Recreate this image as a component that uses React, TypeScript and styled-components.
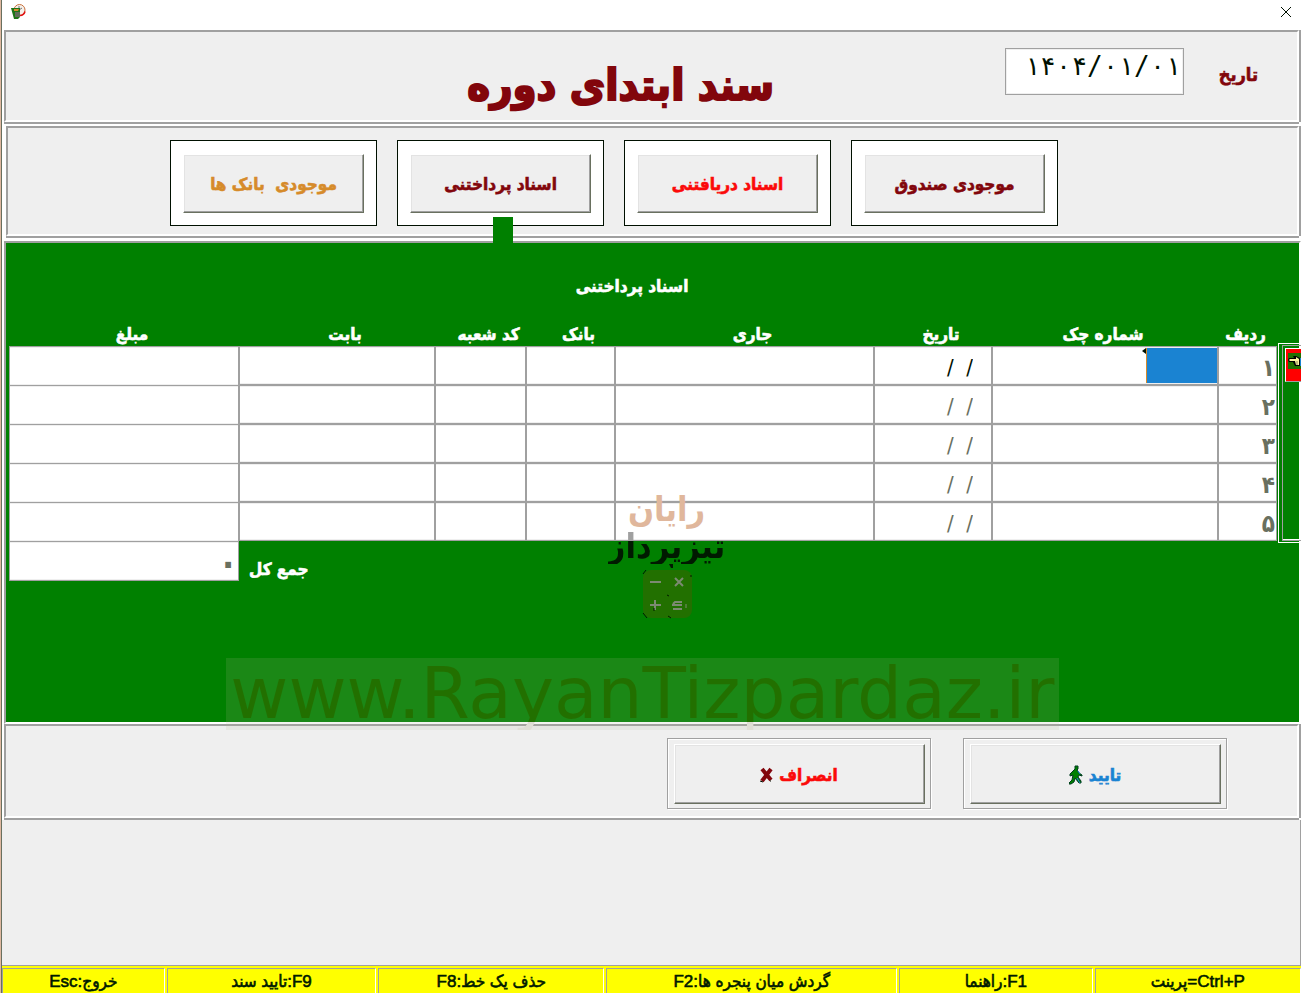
import React from "react";
import styled, { createGlobalStyle } from "styled-components";

const face = "#efefef";
const line = "#a0a0a0";
const shade = "#69705f";
const green = "#008000";
const maroon = "#82060c";
const sans = '"DejaVu Sans Condensed", "DejaVu Sans", sans-serif';
const mono = '"DejaVu Sans Mono", monospace';

const GlobalStyle = createGlobalStyle`
  * { box-sizing: border-box; }
  body { margin: 0; background: #fff; font-family: ${sans}; overflow-x: hidden; }
  button, input { font: inherit; color: inherit; }
`;

const Window = styled.main`
  display: flex;
  flex-direction: column;
  min-height: 100vh;
  padding-left: 2px;
  background: linear-gradient(to right, #dfb8a0 1px, ${shade} 1px, ${shade} 2px, #fff 2px);
`;

const TitleBar = styled.header`
  display: flex;
  align-items: flex-start;
  justify-content: space-between;
  height: 30px;
  padding: 3px 9px 0 8px;
`;

const CloseButton = styled.button`
  display: flex;
  padding: 3px 0;
  border: 0;
  background: none;
`;

const Panel = styled.section<{ $inset?: number }>`
  margin-left: ${(p) => p.$inset ?? 2}px;
  border: 2px solid;
  border-color: ${line} #fff #fff ${line};
  background: ${face};
  box-shadow: 0 2px 0 ${line}, 2px 0 0 ${line};
  margin-right: 2px;
  margin-bottom: 4px;
`;

const HeadPanel = styled(Panel)`
  display: flex;
  height: 92px;
  padding-right: 39px;
`;

const DateLabel = styled.label`
  width: 44px;
  padding-top: 31px;
  color: ${maroon};
  font-size: 18px;
  line-height: 24px;
  font-weight: bold;
  white-space: nowrap;
  -webkit-text-stroke: 0.6px;
`;

const DateInput = styled.input`
  width: 179px;
  height: 47px;
  margin: 16px 30px 0 0;
  padding: 0 2px 12px;
  border: 1px solid ${line};
  box-shadow: inset 0 0 0 1px ${face};
  background: #fff;
  color: #001000;
  font-family: ${mono};
  font-size: 26px;
  direction: ltr;
  text-align: right;
`;

const Title = styled.h1`
  flex: 1;
  margin: 23px 0 0 18%;
  padding-left: 5px;
  color: ${maroon};
  font-size: 43px;
  line-height: 60px;
  text-align: center;
  white-space: nowrap;
  -webkit-text-stroke: 2px;
`;

const TabPanel = styled(Panel)`
  height: 110px;
  margin-bottom: 5px;
  padding: 12px 239px 0 0;
`;

const Tabs = styled.nav`
  display: flex;
  gap: 20px;
`;

const TabFrame = styled.div<{ $active?: boolean }>`
  position: relative;
  display: grid;
  place-items: center;
  width: 207px;
  height: 86px;
  border: 1px solid #001000;
  background: #fff;
  &::after {
    content: ${(p) => (p.$active ? '""' : "none")};
    position: absolute;
    z-index: 1;
    top: 76px;
    left: 95px;
    width: 20px;
    height: 28px;
    background: ${green};
  }
`;

const RaisedButton = styled.button<{ $w: number; $h: number; $color: string }>`
  display: flex;
  align-items: center;
  justify-content: center;
  gap: 6px;
  width: ${(p) => p.$w}px;
  height: ${(p) => p.$h}px;
  padding: 2px 0 0;
  border: 1px solid;
  border-color: #fff ${shade} ${shade} #fff;
  box-shadow: inset -1px -1px 0 ${line}, inset 1px 1px 0 #e3e3e3;
  background: ${face};
  color: ${(p) => p.$color};
  font-size: 17px;
  font-weight: bold;
  line-height: 24px;
  white-space: pre;
  -webkit-text-stroke: 0.6px;
`;

const GreenPanel = styled(Panel)`
  position: relative;
  height: 483px;
  margin-right: 0;
  margin-bottom: 0;
  border-right-color: #fff;
  background: ${green};
  box-shadow: none;
  color: #fff;
  padding-left: 3px;
`;

const SectionTitle = styled.h2`
  margin: 0;
  padding: 30px 44px 0 0;
  font-size: 17px;
  line-height: 27px;
  text-align: center;
  -webkit-text-stroke: 0.6px;
`;

const GridArea = styled.div`
  display: flex;
  align-items: flex-start;
  margin-right: -2px;
`;

const Gutter = styled.div`
  flex: none;
  width: 23px;
  height: 200px;
  margin: 43px 0 0 1px;
  padding: 1px 0 1px 3px;
  border: 1px solid #fff;
  border-right: 0;
`;

const GutterInner = styled.div`
  height: 100%;
  padding: 2px 0 0 2px;
  border: 1px solid ${line};
  border-right: 0;
  box-shadow: inset 0 -1px 0 #fff;
`;

const Marker = styled.div`
  height: 34px;
  padding: 4px 0 0 2px;
  border: 1px solid #fff;
  border-bottom-color: ${line};
  border-right: 0;
  background: #f00;
  direction: ltr;
  overflow: hidden;
`;

const Sheet = styled.table`
  flex: 1;
  table-layout: fixed;
  border-collapse: separate;
  border-spacing: 0;
`;

const HeadCell = styled.th`
  height: 46px;
  padding: 0 0 0 16px;
  font-size: 17px;
  line-height: 24px;
  vertical-align: bottom;
  white-space: nowrap;
  -webkit-text-stroke: 0.6px;
  &:nth-child(-n + 2) {
    padding: 0 4px 0 0;
  }
`;

const Cell = styled.td<{ $amount?: boolean }>`
  height: 39px;
  padding: 0;
  border: 1px solid ${line};
  border-bottom-width: ${(p) => (p.$amount ? 0 : 1)}px;
  background: #fff;
  box-shadow: inset 0 -1px 0 ${face}, inset 0 1px 0 ${face};
`;

const CellRow = styled.div`
  display: flex;
  height: 37px;
`;

type CellKind = "number" | "date" | "total";

const cellPadding: Record<CellKind, string> = {
  number: "4px 1px 0",
  date: "4px 18px 0",
  total: "2px 0 0",
};

const cellSize: Record<CellKind, number> = { number: 24, date: 22, total: 36 };

const CellInput = styled.input<{ $kind?: CellKind; $current?: boolean }>`
  display: block;
  flex: 1;
  width: 100%;
  min-width: 0;
  height: 37px;
  padding: ${(p) => (p.$kind ? cellPadding[p.$kind] : "0 4px")};
  border: 0;
  background: transparent;
  color: ${(p) => (p.$current ? "#001000" : shade)};
  font-size: ${(p) => (p.$kind ? cellSize[p.$kind] : 22)}px;
  font-weight: ${(p) => (p.$kind === "number" || p.$kind === "total" ? "bold" : "normal")};
  text-align: right;
`;

const Selection = styled.span`
  width: 71px;
  margin: 1px 0;
  border-left: 1px solid #d68b2a;
  background: #1a83d2;
`;

const TotalLabel = styled.th`
  padding: 16px 0 0 10px;
  font-size: 17px;
  line-height: 24px;
  text-align: left;
  -webkit-text-stroke: 0.6px;
`;

const TotalCell = styled(Cell)`
  border-bottom-width: 1px;
`;

const Logo = styled.div`
  position: absolute;
  top: 247px;
  left: calc(50% + 14px);
  display: flex;
  flex-direction: column;
  align-items: center;
  width: 140px;
  margin-left: -70px;
  pointer-events: none;
  font-weight: bold;
  white-space: nowrap;
`;

const LogoTop = styled.span`
  color: #e0b79c;
  font-size: 34px;
  line-height: 38px;
`;

const LogoBottom = styled.span`
  background: linear-gradient(${line} 13px, #001a00 13px);
  background-clip: text;
  color: transparent;
  font-size: 34px;
  line-height: 36px;
`;

const SiteMark = styled.div`
  position: absolute;
  top: 415px;
  left: 17%;
  right: 240px;
  height: 72px;
  background: rgba(180, 180, 150, 0.15);
  direction: ltr;
  pointer-events: none;
`;

const SiteName = styled.div`
  background: linear-gradient(#227000 64px, #dfddd4 64px);
  background-clip: text;
  color: transparent;
  font-family: "DejaVu Sans", sans-serif;
  font-size: 71px;
  line-height: 72px;
  text-align: center;
  white-space: nowrap;
`;

const ActionPanel = styled(Panel)`
  display: flex;
  gap: 32px;
  height: 94px;
  padding: 12px 70px 0 0;
  margin-bottom: 2px;
`;

const ActionFrame = styled.div`
  display: grid;
  place-items: center;
  width: 264px;
  height: 71px;
  border: 1px solid ${line};
  box-shadow: inset 1px 1px 0 #fff, 1px 1px 0 #fff;
`;

const EmptyPanel = styled.section`
  flex: 1;
  min-height: 80px;
  border-right: 1px solid ${line};
  border-bottom: 1px solid ${line};
  background: ${face};
`;

const StatusBar = styled.footer`
  display: grid;
  grid-template-columns: 208fr 195fr 293fr 228fr 211fr 164fr;
  column-gap: 2px;
  height: 27px;
  padding-top: 2px;
  background: #ff0;
`;

const StatusItem = styled.div`
  border-top: 1px solid ${line};
  border-left: 1px solid ${line};
  border-right: 1px solid #fff;
  color: #001a00;
  font-family: "Liberation Sans", ${sans};
  font-size: 17px;
  line-height: 26px;
  text-align: center;
  white-space: nowrap;
  -webkit-text-stroke: 0.6px;
`;

const AppIcon = () => (
  <svg width="16" height="17" viewBox="0 0 16 17" aria-hidden="true">
    <circle cx="9.500" cy="7" r="5.500" fill="#f4f0ea" stroke="#c8703c" />
    <path d="M10 12.500a5.500 5.500 0 0 0 5-4" stroke="#e01010" strokeWidth="1.500" fill="none" />
    <path d="M9 3v4l3-2" stroke="#777" fill="none" />
    <path d="M1 5l9 0v9l-2 2H4z" fill="#1d7416" />
    <path d="M4 6h5l-1 2H4z" fill="#d68b2a" />
    <path d="M5 9h5v5H5z" fill="#5f6c58" />
  </svg>
);

const HandIcon = () => (
  <svg width="16" height="16" viewBox="0 0 16 16" aria-hidden="true">
    <rect width="16" height="16" fill="#227000" />
    <path d="M0 7l1-2h5l-1-2h3l4 2v8H7l-2-4H1z" fill="#000" />
    <path d="M1 7l1-1h6V4l3 2v6H8l-1-4H2z" fill="#fff7a0" />
    <path d="M8 9h2M8 11h2" stroke="#8a8450" />
    <rect x="12" y="5" width="4" height="8" fill="#1a83d2" />
  </svg>
);

const WalkIcon = () => (
  <svg width="14" height="20" viewBox="0 0 14 20" aria-hidden="true">
    <path
      d="M6 1h3v3l-1 1 2 3 3 2v1l-3-1-1 2 3 4v2h-2l-4-5-1 4-3 2H0v-1l3-3 1-5-3 1V9l4-4 1-1z"
      fill={green}
      stroke="#003c20"
    />
    <path d="M9 6l2 3M8 13l3 5" stroke="#1a83d2" />
  </svg>
);

const CrossIcon = () => (
  <svg width="13" height="16" viewBox="0 0 13 16" aria-hidden="true">
    <path d="M2 2l9 11M11 2L2 14" stroke="#82060c" strokeWidth="4" />
    <path d="M0 14l3 1M10 14h1" stroke="#001000" />
  </svg>
);

const Calculator = () => (
  <svg width="52" height="56" viewBox="0 0 52 56" aria-hidden="true">
    <path d="M28 0h4v4h-2z" fill="#001a00" />
    <rect x="2" y="6" width="49" height="48" rx="8" fill="#227000" />
    <g stroke="#7c8a72" strokeWidth="2" fill="none">
      <path d="M9 18h11M34 14l8 8M42 14l-8 8M9 41h11M14 36v10" />
      <path d="M32 40l2-2h7M31 41h10M32 45h9" />
      <path d="M45 40v4" strokeWidth="1" />
    </g>
    <path
      d="M2 10l3-4M49 12h2M2 49l4 5M26 31l2 1M27 52l3 2M13 44v3"
      stroke="#001a00"
      fill="none"
    />
  </svg>
);

const tabs = [
  { text: "موجودی صندوق", color: maroon },
  { text: "اسناد دریافتنی", color: "#fb0a0a" },
  { text: "اسناد پرداختنی", color: maroon, active: true },
  { text: "موجودی  بانک ها", color: "#d68b2a" },
];

const columns = [
  { name: "ردیف", width: "59px" },
  { name: "شماره چک", width: "226px" },
  { name: "تاریخ", width: "118px" },
  { name: "جاری", width: "auto" },
  { name: "بانک", width: "89px" },
  { name: "کد شعبه", width: "91px" },
  { name: "بابت", width: "196px" },
  { name: "مبلغ", width: "230px" },
];

const rows = ["۱", "۲", "۳", "۴", "۵"];

const shortcuts = [
  "Ctrl+P=پرینت",
  "F1:راهنما",
  "گردش میان پنجره ها:F2",
  "حذف یک خط:F8",
  "F9:تایید سند",
  "خروج:Esc",
];

export default function App() {
  return (
    <>
      <GlobalStyle />
      <Window>
        <TitleBar>
          <AppIcon />
          <CloseButton aria-label="بستن">
            <svg width="12" height="12" viewBox="0 0 12 12" aria-hidden="true">
              <path d="M1 1l10 10M11 1L1 11" stroke="#001000" fill="none" />
            </svg>
          </CloseButton>
        </TitleBar>

        <HeadPanel dir="rtl">
          <DateLabel htmlFor="doc-date">تاریخ</DateLabel>
          <DateInput id="doc-date" defaultValue="۱۴۰۴/۰۱/۰۱" />
          <Title>سند ابتدای دوره</Title>
        </HeadPanel>

        <TabPanel $inset={4} dir="rtl">
          <Tabs>
            {tabs.map((t) => (
              <TabFrame key={t.text} $active={t.active}>
                <RaisedButton $w={181} $h={59} $color={t.color}>
                  {t.text}
                </RaisedButton>
              </TabFrame>
            ))}
          </Tabs>
        </TabPanel>

        <GreenPanel dir="rtl">
          <SectionTitle>اسناد پرداختنی</SectionTitle>
          <GridArea>
            <Gutter>
              <GutterInner>
                <Marker>
                  <HandIcon />
                </Marker>
              </GutterInner>
            </Gutter>
            <Sheet>
              <colgroup>
                {columns.map((c) => (
                  <col key={c.name} style={{ width: c.width }} />
                ))}
              </colgroup>
              <thead>
                <tr>
                  {columns.map((c) => (
                    <HeadCell key={c.name} scope="col">
                      {c.name}
                    </HeadCell>
                  ))}
                </tr>
              </thead>
              <tbody>
                {rows.map((n, r) => (
                  <tr key={n}>
                    {columns.map((c, i) => (
                      <Cell key={c.name} $amount={i === 7}>
                        <CellRow>
                          {r === 0 && i === 1 && <Selection />}
                          {r === 0 && i === 1 && (
                            <svg width="4" height="8" viewBox="0 0 4 8" aria-hidden="true">
                              <path d="M4 1v6L0 4z" fill="#001000" />
                            </svg>
                          )}
                          <CellInput
                            aria-label={`${c.name} ${n}`}
                            $kind={i === 0 ? "number" : i === 2 ? "date" : undefined}
                            $current={r === 0 && i > 0}
                            defaultValue={i === 0 ? n : i === 2 ? "/  /" : ""}
                          />
                        </CellRow>
                      </Cell>
                    ))}
                  </tr>
                ))}
              </tbody>
              <tfoot>
                <tr>
                  <td colSpan={6} />
                  <TotalLabel scope="row">جمع کل</TotalLabel>
                  <TotalCell>
                    <CellInput aria-label="جمع کل" $kind="total" defaultValue="٠" />
                  </TotalCell>
                </tr>
              </tfoot>
            </Sheet>
          </GridArea>
          <Logo>
            <LogoTop>رایان</LogoTop>
            <LogoBottom>تیزپرداز</LogoBottom>
            <Calculator />
          </Logo>
          <SiteMark>
            <SiteName>www.RayanTizpardaz.ir</SiteName>
          </SiteMark>
        </GreenPanel>

        <ActionPanel dir="rtl">
          <ActionFrame>
            <RaisedButton $w={251} $h={60} $color="#1a83d2">
              تایید
              <WalkIcon />
            </RaisedButton>
          </ActionFrame>
          <ActionFrame>
            <RaisedButton $w={251} $h={60} $color="#fb0a0a">
              انصراف
              <CrossIcon />
            </RaisedButton>
          </ActionFrame>
        </ActionPanel>

        <EmptyPanel />

        <StatusBar dir="rtl">
          {shortcuts.map((s) => (
            <StatusItem key={s}>{s}</StatusItem>
          ))}
        </StatusBar>
      </Window>
    </>
  );
}
